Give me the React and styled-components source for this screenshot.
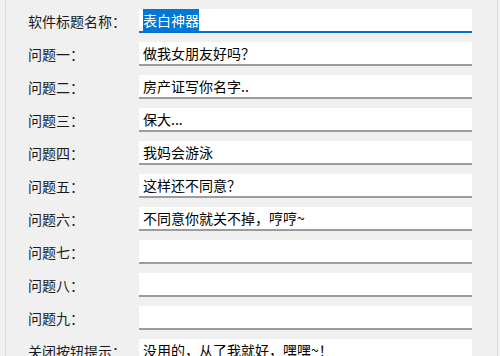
import styled, { createGlobalStyle } from "styled-components";

const Global = createGlobalStyle`
  html, body {
    margin: 0;
    padding: 0;
    background: #f0f0f0;
    overflow: hidden;
  }
  body {
    font-family: "Noto Sans CJK SC", "Noto Sans", sans-serif;
  }
`;

const Page = styled.div`
  width: 500px;
  height: 356px;
  background: #f0f0f0;
  padding-left: 5px;
  box-sizing: border-box;
  display: flex;
`;

const Panel = styled.div`
  flex: 1;
  border-left: 1px solid #dadada;
  border-right: 1px solid #dcdcdc;
  margin-right: 2px;
  padding: 9px 0 0 22px;
  box-sizing: border-box;
  overflow: hidden;
`;

const Form = styled.div`
  display: grid;
  grid-template-columns: 111px 333px;
  grid-auto-rows: 24px;
  row-gap: 9px;
  align-items: center;
`;

const Label = styled.div`
  font-size: 14px;
  color: #1a1a1a;
  white-space: nowrap;
  line-height: 24px;
`;

const Field = styled.div`
  height: 24px;
  box-sizing: border-box;
  background: #ffffff;
  border-bottom: ${(p) => (p.$active ? "2px solid #0a6ed1" : "2px solid #9c9c9c")};
  padding-left: 4px;
  font-size: 14px;
  color: #000;
  line-height: 23px;
  white-space: nowrap;
  overflow: hidden;
`;

const Selected = styled.span`
  background: #0078d7;
  color: #fff;
  padding: 1px 0;
`;

const rows = [
  ["问题一：", "做我女朋友好吗？"],
  ["问题二：", "房产证写你名字.."],
  ["问题三：", "保大..."],
  ["问题四：", "我妈会游泳"],
  ["问题五：", "这样还不同意？"],
  ["问题六：", "不同意你就关不掉，哼哼~"],
  ["问题七：", ""],
  ["问题八：", ""],
  ["问题九：", ""],
  ["关闭按钮提示：", "没用的，从了我就好，嘿嘿~！"],
];

export default function App() {
  return (
    <Page>
      <Global />
      <Panel>
        <Form>
          <Label>软件标题名称：</Label>
          <Field $active>
            <Selected>表白神器</Selected>
          </Field>
          {rows.map(([label, value]) => (
            <>
              <Label key={label + "l"}>{label}</Label>
              <Field key={label + "f"}>{value}</Field>
            </>
          ))}
        </Form>
      </Panel>
    </Page>
  );
}
